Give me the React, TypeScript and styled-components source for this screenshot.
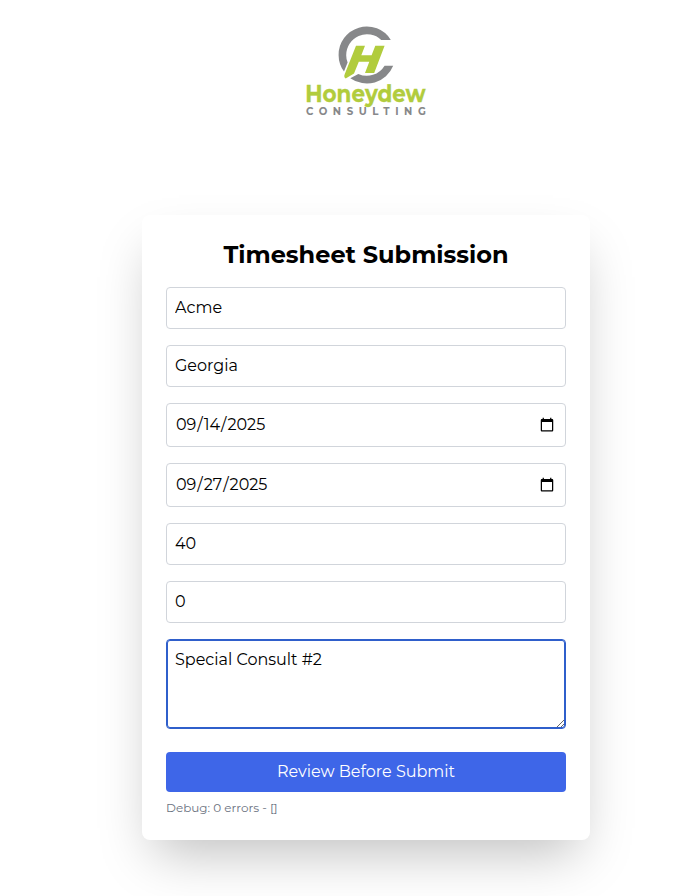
import React, { useState } from "react";
import styled, { createGlobalStyle, css } from "styled-components";

const GlobalStyle = createGlobalStyle`
  *, *::before, *::after { box-sizing: border-box; }
  html, body { margin: 0; overflow: hidden; background: #fff; }
  body { font-family: Montserrat, Inter, sans-serif; color: #000; }
`;

const Page = styled.main`
  height: 896px;
  padding-left: 58px;
  display: flex;
  flex-direction: column;
  align-items: center;
`;

const Header = styled.header`
  height: 215px;
  padding-top: 20px;
`;

const Card = styled.section`
  width: 448px;
  height: 625px;
  padding: 24px;
  border-radius: 8px;
  background: #fff;
  box-shadow: 0 25px 50px -12px rgba(0, 0, 0, 0.25);
`;

const Title = styled.h2`
  margin: 0 0 16px;
  font-size: 24px;
  line-height: 32px;
  font-weight: 700;
  text-align: center;
`;

const Form = styled.form`
  display: flex;
  flex-direction: column;
  gap: 16px;
`;

const fieldStyle = css`
  display: block;
  width: 100%;
  margin: 0;
  padding: 8px;
  border: 1px solid #d1d5db;
  border-radius: 4px;
  background: #fff;
  color: #000;
  font-family: inherit;
  font-size: 16px;
  line-height: 24px;
  outline: none;
`;

const Field = styled.input`
  ${fieldStyle}
  height: 42px;
  padding: 7px 8px 9px;
`;

const DateField = styled.input.attrs({ type: "date" })`
  ${fieldStyle}
  height: 44px;
`;

const Notes = styled.textarea`
  ${fieldStyle}
  height: 90px;
  resize: vertical;
  border-color: #2f5fcb;
  box-shadow: inset 0 0 0 1px #2f5fcb;
`;

const SubmitButton = styled.button`
  height: 40px;
  margin-top: 7px;
  padding: 8px 16px;
  border: 0;
  border-radius: 4px;
  background: #3e66e8;
  color: #fff;
  font: 400 16px/24px Montserrat, Inter, sans-serif;
`;

const DebugLine = styled.p`
  margin: 8px 0 0;
  color: #6b7280;
  font-size: 12px;
  line-height: 16px;
`;

function Logo() {
  return (
    <svg width="140" height="106" viewBox="296 20 140 106" role="img" aria-label="Honeydew Consulting">
      <g fill="#87888a">
        <path d="M390.8 39.9H381.2A20.8 20.8 0 0 0 346.2 55.2Q346.2 59 347.6 62.5L344 71.6A28.4 28.4 0 0 1 338.6 55.2A28.2 28.2 0 0 1 390.8 39.9Z" />
        <path d="M393.2 65.7H384.6A20.8 20.8 0 0 1 358.3 73.9L350.3 78.2A28.4 28.4 0 0 0 393.2 65.7Z" />
      </g>
      <path
        fill="#b1cc3d"
        d="M356 45.8H365L361.3 55.2H371.6L375.3 45.8H384.6L374.2 73H365L369.3 61.8H358.8L354 73.6L345.7 78.5Q343.5 77 344.7 74.3Z"
      />
      <text x="305.2" y="101.6" textLength="120.5" lengthAdjust="spacingAndGlyphs" fill="#b1cc3d" stroke="#b1cc3d" strokeWidth="0.3" fontFamily="Montserrat, Inter, sans-serif" fontSize="22.8" fontWeight="700">Honeydew</text>
      <text x="306" y="114.7" textLength="119.8" fill="#87888a" fontFamily="Montserrat, Inter, sans-serif" fontSize="10.2" fontWeight="700">CONSULTING</text>
    </svg>
  );
}

export default function App() {
  const [values, setValues] = useState({
    client: "Acme",
    consultant: "Georgia",
    start: "2025-09-14",
    end: "2025-09-27",
    hours: "40",
    overtime: "0",
    notes: "Special Consult #2",
  });
  const bind = (key: keyof typeof values) => ({
    value: values[key],
    onChange: (e: React.ChangeEvent<HTMLInputElement | HTMLTextAreaElement>) =>
      setValues({ ...values, [key]: e.target.value }),
  });

  return (
    <>
      <GlobalStyle />
      <Page>
        <Header>
          <Logo />
        </Header>
        <Card>
          <Title>Timesheet Submission</Title>
          <Form onSubmit={(e) => e.preventDefault()}>
            <Field type="text" {...bind("client")} />
            <Field type="text" {...bind("consultant")} />
            <DateField {...bind("start")} />
            <DateField {...bind("end")} />
            <Field type="text" {...bind("hours")} />
            <Field type="text" {...bind("overtime")} />
            <Notes {...bind("notes")} />
            <SubmitButton type="submit">Review Before Submit</SubmitButton>
          </Form>
          <DebugLine>Debug: 0 errors - []</DebugLine>
        </Card>
      </Page>
    </>
  );
}
